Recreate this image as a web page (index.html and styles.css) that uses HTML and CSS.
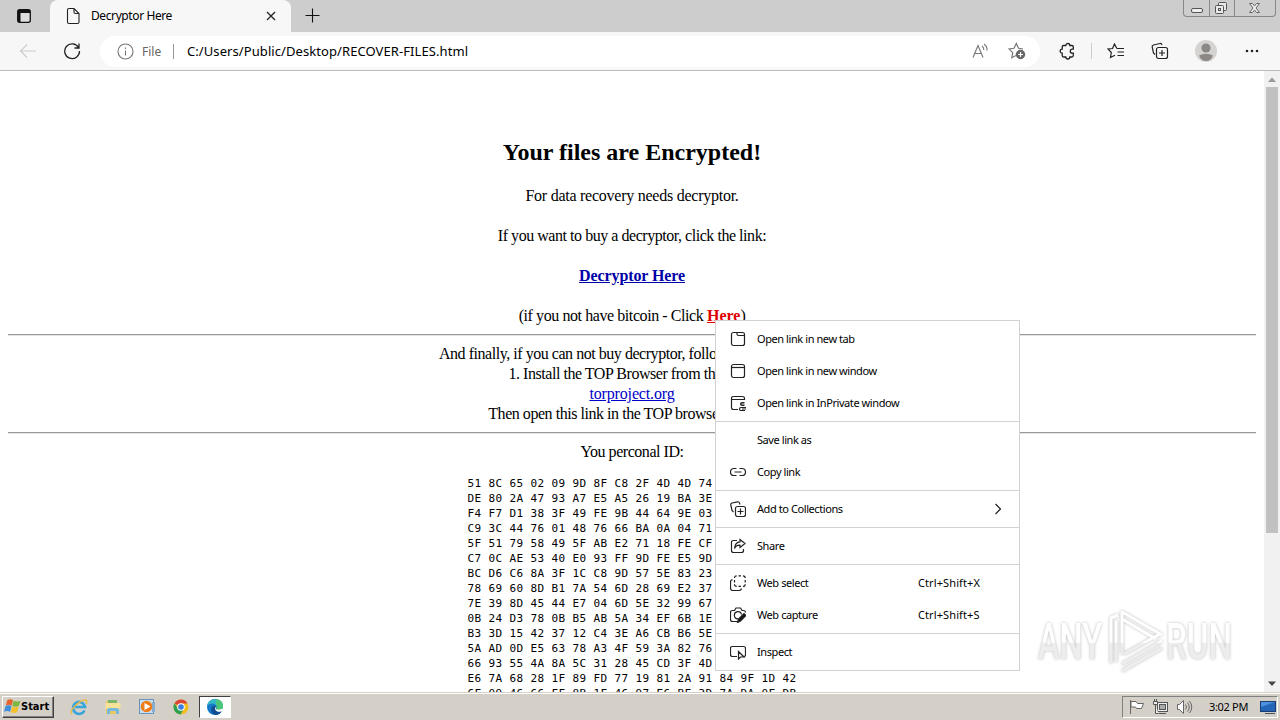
FILE: index.html
```html
<!DOCTYPE html>
<html lang="en">
<head>
    <meta charset="UTF-8">
    <title>Decryptor Here</title>
    <link rel="stylesheet" href="styles.css">
</head>
<body>
    <div class="tabstrip">
        <div class="workspaces">
            <svg width="16" height="16" viewBox="0 0 16 16"><rect x="1.700" y="1.700" width="12.600" height="12.600" rx="2" fill="#ddd" stroke="#111" stroke-width="1.300"/><path d="M2 2h12v3H2z" fill="#111"/><path d="M2 4h2.500v10H2z" fill="#111"/></svg>
        </div>
        <div class="tab">
            <svg width="16" height="18" viewBox="0 0 16 18" fill="none" stroke="#222" stroke-width="1.1"><path d="M4 1.5h5l5 5v8.500q0 1.500-1.500 1.500h-8.500q-1.500 0-1.500-1.500v-12q0-1.500 1.500-1.500zM9 1.500v3.500q0 1.500 1.500 1.500h3.500"/></svg>
            <span class="tab-title">Decryptor Here</span>
            <svg width="10" height="10" viewBox="0 0 10 10" stroke="#222" stroke-width="1.3"><path d="M1 1l8 8M9 1l-8 8"/></svg>
        </div>
        <svg class="new-tab" width="16" height="16" viewBox="0 0 16 16" stroke="#111" stroke-width="1.1"><path d="M1.500 8.500h14M8.500 1.500v14"/></svg>
        <div class="window-buttons">
            <span class="win-min"><svg width="25" height="16" viewBox="0 0 25 16"><rect x="7.500" y="8.500" width="11" height="4" rx="1.500" fill="#eee" stroke="#555"/></svg></span>
            <span class="win-max"><svg width="24" height="16" viewBox="0 0 24 16" fill="#e8e8e8" stroke="#555"><rect x="8.500" y="2.500" width="8" height="8" rx="1"/><rect x="5.500" y="5.500" width="8" height="8" rx="1"/><rect x="8.500" y="8.500" width="2" height="2"/></svg></span>
            <span class="win-close"><svg width="40" height="16" viewBox="0 0 40 16"><path d="M14.500 3.500h3l2 2.500 2-2.500h3l-3.500 4.500 3.500 4.500h-3l-2-2.500-2 2.500h-3l3.500-4.500z" fill="#eee" stroke="#666"/></svg></span>
        </div>
    </div>

    <div class="toolbar">
        <svg class="back" width="18" height="16" viewBox="0 0 18 16" fill="none" stroke="#ccc" stroke-width="1.1"><path d="M17 8H2M8 1.500L1.500 8 8 14.500"/></svg>
        <svg class="reload" width="18" height="18" viewBox="0 0 18 18" fill="none" stroke="#222" stroke-width="1.3"><path d="M15.500 5.500A7.400 7.400 0 1 0 16.500 9M16 1.500v4.500h-4.500"/></svg>
        <div class="address">
            <svg width="17" height="17" viewBox="0 0 17 17" fill="none" stroke="#777" stroke-width="1.1"><circle cx="8.500" cy="8.500" r="7.500"/><path d="M8.500 7.500v5M8.500 4.500v1.500"/></svg>
            <span class="scheme">File</span>
            <span class="address-line"></span>
            <span class="url">C:/Users/Public/Desktop/RECOVER-FILES.html</span>
            <svg class="read" width="17" height="16" viewBox="0 0 17 16" fill="none" stroke="#777" stroke-width="1.1"><path d="M1 14.500L6 2.500l5 12M2.800 10.500h6.400M10 3q2 1.500 1.800 4M12 1q3.500 2.500 3 6.500"/></svg>
            <svg width="18" height="18" viewBox="0 0 18 18"><path d="M15 7l-4.500-.7L8.300 1.500 6 6.300l-5 .7 3.700 3.700-.9 5L8 13.500" fill="none" stroke="#777" stroke-width="1.200"/><circle cx="12.500" cy="12.500" r="4.700" fill="#666"/><path d="M12.500 10v5M10 12.500h5" stroke="#fff" stroke-width="1.200"/></svg>
        </div>
        <svg class="puzzle" width="17" height="18" viewBox="0 0 17 18" fill="none" stroke="#222" stroke-width="1.3"><path d="M4.500 3.500h2.300a2 2 0 0 1 4 0h2q1.500 0 1.500 1.500v2.200h-1a2 2 0 0 0 0 4h1v2.300q0 1.500-1.500 1.500h-2a2 2 0 0 1-4 0H4.500q-1.300 0-1.300-1.500v-2.300a2 2 0 0 1 0-4V5q0-1.500 1.300-1.500z"/></svg>
        <span class="toolbar-line"></span>
        <svg class="favorites" width="18" height="16" viewBox="0 0 18 16" fill="none" stroke="#222" stroke-width="1.2"><path d="M9.800 5.500L7.500 1 5.500 5.500 1 6l3.300 3.500L3.500 14.500 8 12.200M10 5.500H17M10.500 9H17M10.500 12.500H17"/></svg>
        <svg class="collections" width="18" height="18" viewBox="0 0 18 18" fill="none" stroke="#222" stroke-width="1.2"><path d="M4 12.500L2.500 11 1.200 5q-.4-1.500 1.300-2L9 1.500q1.500-.3 2 1.500"/><rect x="5.500" y="5.500" width="11" height="11" rx="2"/><path d="M11 8v6M8 11h6"/></svg>
        <svg class="profile" width="22" height="22" viewBox="0 0 22 22"><circle cx="11" cy="11" r="11" fill="#d5d3d1"/><circle cx="11" cy="8" r="4.600" fill="#8b8885"/><path d="M4 15.500q7-3.500 14 0-2 5.500-7 5.500t-7-5.500z" fill="#8b8885"/></svg>
        <svg class="dots" width="14" height="4" viewBox="0 0 14 4" fill="#222"><circle cx="2" cy="2" r="1.300"/><circle cx="7" cy="2" r="1.300"/><circle cx="12" cy="2" r="1.300"/></svg>
    </div>

    <div class="viewport">
        <div class="page">
            <h2>Your files are Encrypted!</h2>
            <p class="needs">For data recovery needs decryptor.</p>
            <p>If you want to buy a decryptor, click the link:</p>
            <p class="decryptor"><a href="#">Decryptor Here</a></p>
            <p class="bitcoin">(if you not have bitcoin - Click <a href="#">Here</a>)</p>
            <hr>
            <div class="steps">
                And finally, if you can not buy decryptor, follow these two steps:<br>
                1. Install the TOP Browser from this link:<br>
                <a class="tor" href="#">torproject.org</a><br>
                Then open this link in the TOP browser: support
            </div>
            <hr>
            <div class="steps">You perconal ID:</div>
<pre>51 8C 65 02 09 9D 8F C8 2F 4D 4D 74
DE 80 2A 47 93 A7 E5 A5 26 19 BA 3E
F4 F7 D1 38 3F 49 FE 9B 44 64 9E 03
C9 3C 44 76 01 48 76 66 BA 0A 04 71
5F 51 79 58 49 5F AB E2 71 18 FE CF
C7 0C AE 53 40 E0 93 FF 9D FE E5 9D
BC D6 C6 8A 3F 1C C8 9D 57 5E 83 23
78 69 60 8D B1 7A 54 6D 28 69 E2 37
7E 39 8D 45 44 E7 04 6D 5E 32 99 67
0B 24 D3 78 0B B5 AB 5A 34 EF 6B 1E
B3 3D 15 42 37 12 C4 3E A6 CB B6 5E
5A AD 0D E5 63 78 A3 4F 59 3A 82 76
66 93 55 4A 8A 5C 31 28 45 CD 3F 4D</pre>
<pre>E6 7A 68 28 1F 89 FD 77 19 81 2A 91 84 9F 1D 42
6F 09 46 66 FF 8B 1F 46 97 E6 BF 3D 7A DA 0F DB</pre>
        </div>
        <div class="scrollbar">
            <svg width="16" height="16" viewBox="0 0 16 16"><path d="M4 11l4-4.500 4 4.500z" fill="#999"/></svg>
            <div class="thumb"></div>
            <svg class="scroll-down" width="16" height="16" viewBox="0 0 16 16"><path d="M4 5.500h8l-4 4.500z" fill="#444"/></svg>
        </div>
    </div>

    <div class="taskbar">
        <div class="start">
            <svg width="17" height="17" viewBox="0 0 16 16"><path d="M3 2q3-1.500 5.500 0L7.200 7Q5 5.500 1.800 7z" fill="#e8602c"/><path d="M9 2.500q3 1.500 6.500 0l-1.500 5q-3 1.400-6.200 0z" fill="#7db843"/><path d="M1.500 7.600q3-1.500 5.500 0L5.800 13q-3-1.500-5.800 0z" fill="#3d8edb"/><path d="M7.700 8.100q2.700 1.500 6 0l-1.300 5.400q-3 1.400-6 0z" fill="#f5c02c"/></svg>
            <span>Start</span>
        </div>
        <div class="launcher">
            <svg width="18" height="18" viewBox="0 0 18 18" fill="none"><path d="M14.500 12.500A6 6 0 1 1 15 9H5" stroke="#38a5dc" stroke-width="2.600"/><path d="M2 16Q-1 14 5 8t10-6q3 0 1 4" stroke="#e9bc40" stroke-width="1.300"/></svg>
            <svg width="18" height="18" viewBox="0 0 18 18"><path d="M2 3h5l1 2h7v11H2z" fill="#e9c963"/><path d="M4 2h9v5H4z" fill="#79b66b"/><path d="M1.500 5h15v6h-15z" fill="#f7e297"/><path d="M3 16v-4q0-2 2-2h8q2 0 2 2v4h-3v-3H6v3z" fill="#77b8df"/></svg>
            <svg width="18" height="18" viewBox="0 0 18 18"><rect x="1.500" y="1.500" width="14" height="14" fill="#c9dff2" stroke="#6994bf"/><rect x="14" y="4" width="3" height="10" fill="#86add0"/><circle cx="8.500" cy="8.500" r="5.800" fill="#ee7d17"/><path d="M6.500 5l6 3.500-6 3.500z" fill="#fff"/></svg>
            <svg width="18" height="18" viewBox="0 0 18 18"><circle cx="9" cy="9" r="7.500" fill="#f3bd20"/><path d="M9 9L2.500 5.200A7.500 7.500 0 0 1 15.500 5.500H9z" fill="#dc4638"/><path d="M2.500 5.200A7.500 7.500 0 0 0 8.500 16.500L12 10.500 9 9 6 10.500z" fill="#2fa052"/><circle cx="9" cy="9" r="3.800" fill="#fff"/><circle cx="9" cy="9" r="2.800" fill="#3b7de0"/></svg>
        </div>
        <div class="running">
            <svg width="18" height="18" viewBox="0 0 18 18"><circle cx="9" cy="9" r="8" fill="#1678c8"/><path d="M1.200 7.500Q3 1 9 1q7.500 0 8 7 0 4-4 4-3 0-3-1.500 1-1 .5-2.500Q9 5 6 5.500q-3 .3-4.800 2z" fill="#35b9c4"/><path d="M10 1.200q7 1 7 6.800 0 4-4 4-3 0-3-1.500 2-1.500 0-4.500z" fill="#4dc777"/><path d="M10 10.500q1 2.500 6 2-2 4.500-7 4.500-5-2-3.500-7Q7 7.500 10 8z" fill="#124d91"/><path d="M9.600 8.500q-1.800 3 1.600 5 3 1 6.800-1l-.3-2.500q-4 2.500-7.700 1.200z" fill="#fff"/></svg>
        </div>
        <div class="tray">
            <svg width="16" height="16" viewBox="0 0 16 16" fill="#fff" stroke="#666"><path d="M1.500 1v14M2 2.500h5l1.500 2h6l-2 5h-5l-1-1.500H2z"/></svg>
            <svg width="17" height="16" viewBox="0 0 17 16" fill="#eee" stroke="#555"><rect x="5.500" y="3.500" width="10" height="9"/><rect x="7.500" y="5.500" width="6" height="5" fill="#aaa"/><path d="M7 14.500h7M1.500 2.500v3h4v-3zM3.500 6v8.500h3M2.500 0v2.500M4.500 0v2.500"/></svg>
            <svg width="17" height="16" viewBox="0 0 17 16" fill="#fff" stroke="#666"><path d="M1.500 5.500h2l4-4v13l-4-4h-2z"/><path d="M9.500 5.500q2 2.500 0 5M11.500 3.500q3.500 4.500 0 9M13.500 2q4.500 6 0 12" fill="none"/></svg>
            <span class="clock">3:02 PM</span>
            <svg width="16" height="16" viewBox="0 0 16 16"><rect x=".5" y="2.500" width="15" height="10" fill="#2565b8" stroke="#1a3d75"/><path d="M1 3h14L1 8z" fill="#4b91dd"/><path d="M5 14.500h10" stroke="#456"/></svg>
        </div>
    </div>

    <svg class="watermark" width="210" height="76" viewBox="0 0 210 76">
        <defs>
            <linearGradient id="wm-fade" x1="0" y1="0" x2="0" y2="76" gradientUnits="userSpaceOnUse">
                <stop offset="0.500" stop-color="#fff"/>
                <stop offset="0.520" stop-color="#ededed"/>
            </linearGradient>
        </defs>
        <g class="wm-letters">
            <text x="8" y="55" textLength="64" lengthAdjust="spacingAndGlyphs">ANY</text>
            <text x="136" y="55" textLength="66" lengthAdjust="spacingAndGlyphs">RUN</text>
        </g>
        <g class="wm-logo">
            <path d="M81 59V14l7-3"/>
            <path d="M86 17v41"/>
            <path d="M92 50V8l40 23M92 15l34 20M94 50l36-20M92 60l40-23M92 67l40-23"/>
        </g>
    </svg>

    <div class="menu">
        <div class="item">
            <svg viewBox="0 0 16 16"><rect x="1.500" y="1.500" width="13" height="13" rx="2"/><path d="M7 1.500v1.500q0 1.500 1.500 1.500h6"/></svg>
            <span>Open link in new tab</span>
        </div>
        <div class="item">
            <svg viewBox="0 0 16 16"><rect x="1.500" y="1.500" width="13" height="13" rx="2"/><path d="M1.500 4.500h13"/></svg>
            <span>Open link in new window</span>
        </div>
        <div class="item">
            <svg viewBox="0 0 16 16"><path d="M8 14.500H3.500q-2 0-2-2v-9q0-2 2-2h9q2 0 2 2V5M1.500 4.500h13M14.500 7.500h-2q-2 0-2 1.500t2 1.500h2M10.500 9h4M16 12.500h-5q-1.500 0-1.500 1.500t1.500 1.500h4M12 14h4"/></svg>
            <span>Open link in InPrivate window</span>
        </div>
        <div class="divider"></div>
        <div class="item">
            <svg viewBox="0 0 16 16"></svg>
            <span>Save link as</span>
        </div>
        <div class="item">
            <svg viewBox="0 0 16 16"><path d="M6.500 4.500H4a3.500 3.500 0 0 0 0 7h2.500M9.500 4.500H12a3.500 3.500 0 0 1 0 7H9.500M4.500 8h7"/></svg>
            <span>Copy link</span>
        </div>
        <div class="divider"></div>
        <div class="item">
            <svg viewBox="0 0 16 16"><path d="M3.500 11L2 9.500.8 4q-.3-1.500 1.200-2L7.500.8q1.500-.3 2 1.200L10 3.500"/><rect x="5.500" y="5.500" width="10" height="10" rx="2"/><path d="M10.500 7.500v6M7.500 10.500h6"/></svg>
            <span>Add to Collections</span>
            <svg class="arrow" viewBox="0 0 16 16"><path d="M5.500 3l5 5-5 5"/></svg>
        </div>
        <div class="divider"></div>
        <div class="item">
            <svg viewBox="0 0 16 16"><path d="M7 2.500H3.500q-2 0-2 2v8q0 2 2 2h8q2 0 2-2V11M10 1.500l5 4-5 4V7.200Q6 7 4.500 10.500 5 4 10 3.800z"/></svg>
            <span>Share</span>
        </div>
        <div class="divider"></div>
        <div class="item">
            <svg viewBox="0 0 16 16"><path d="M2.500 4.500q-2 .5-2 2.500v6q0 2.500 2.500 2.500h6q2 0 2.500-2"/><path d="M4.500 3q0-2.200 2.200-2.200M8.500.8h2.500M13 .8q2.200 0 2.200 2.200M15.200 5v2.500M15.200 9.200q0 2.200-2.200 2.200M11 11.400H8.500M6.700 11.400q-2.200 0-2.200-2.200M4.500 7.500V5"/></svg>
            <span>Web select</span>
            <span class="shortcut">Ctrl+Shift+X</span>
        </div>
        <div class="item">
            <svg viewBox="0 0 16 16"><path d="M7 14.500H2.500q-2 0-2-2v-7q0-2 2-2h2L6 1h4.500l1.500 2.500h1.500q2 0 2 2M8 11.800a3.600 3.600 0 1 1 3.500-4.300"/><path d="M7.500 15.500l1-3.500L14 6.500l2 2-5.500 5.500z" fill="#111"/></svg>
            <span>Web capture</span>
            <span class="shortcut">Ctrl+Shift+S</span>
        </div>
        <div class="divider"></div>
        <div class="item">
            <svg viewBox="0 0 16 16"><path d="M7 12.500H2.500q-2 0-2-2V4.500q0-2 2-2h11q2 0 2 2v6q0 1.500-1 2M8.500 7.500v7.500l2-2h3.500z"/></svg>
            <span>Inspect</span>
        </div>
    </div>
</body>
</html>
```
FILE: styles.css
```css
* {
    box-sizing: border-box;
}
body {
    margin: 0;
    width: 1280px;
    height: 720px;
    overflow: hidden;
    display: flex;
    flex-direction: column;
    position: relative;
    background: #fff;
    color: #000;
    font-family: "Noto Sans", sans-serif;
    font-size: 12px;
}
svg {
    display: block;
    flex: none;
}

/* tabs */
.tabstrip {
    height: 32px;
    background: #cdcdcd;
    display: flex;
    flex: none;
}
.workspaces {
    width: 50px;
    padding: 8px 0 0 16px;
}
.tab {
    width: 241px;
    display: flex;
    align-items: center;
    padding: 0 15px 0 15px;
    background: #f7f7f7;
    border-radius: 8px 8px 0 0;
}
.tab-title {
    margin: -2px 0 0 10px;
    flex: 1;
    font-size: 12px;
    letter-spacing: -0.4px;
}
.new-tab {
    margin: 7px 0 0 13px;
}
.window-buttons {
    display: flex;
    margin-left: auto;
    margin-right: 4px;
    height: 17px;
    border: 1px solid #888;
    border-top: 0;
    border-radius: 0 0 4px 4px;
}
.win-max {
    border-left: 1px solid #888;
    border-right: 1px solid #888;
}

/* toolbar */
.toolbar {
    height: 39px;
    background: #f7f7f7;
    border-bottom: 1px solid #bbb;
    display: flex;
    align-items: center;
    flex: none;
}
.back {
    margin-left: 19px;
}
.reload {
    margin-left: 26px;
}
.address {
    width: 940px;
    height: 31px;
    margin-left: 19px;
    padding: 0 14px 0 17px;
    background: #fff;
    border-radius: 16px;
    display: flex;
    align-items: center;
}
.scheme {
    width: 24px;
    margin-left: 8px;
    color: #666;
}
.address-line {
    width: 1px;
    height: 15px;
    background: #999;
    margin: 0 13px 0 7px;
}
.url {
    flex: 1;
    margin-top: -1px;
    font-size: 13px;
    letter-spacing: 0.08px;
}
.read {
    margin-right: 19px;
}
.puzzle {
    margin-left: 19px;
}
.toolbar-line {
    width: 1px;
    height: 16px;
    background: #ccc;
    margin: 0 15px 0 15px;
}
.collections {
    margin-left: 26px;
}
.profile {
    margin-left: 26px;
}
.dots {
    margin-left: 28px;
}

/* web page */
.viewport {
    height: 621px;
    display: flex;
    flex: none;
    overflow: hidden;
}
.page {
    width: 1264px;
    padding: 67px 8px 0;
    text-align: center;
    font-family: "Liberation Serif", serif;
    font-size: 16px;
    line-height: 20px;
    letter-spacing: -0.46px;
    white-space: nowrap;
}
h2 {
    margin: 0 0 20px;
    font-size: 24px;
    line-height: 28px;
    letter-spacing: 0;
}
p {
    margin: 0 0 20px;
}
a {
    color: #0000c8;
}
.needs {
    letter-spacing: -0.25px;
}
.decryptor {
    font-weight: bold;
    letter-spacing: -0.1px;
}
.decryptor a {
    color: #0000a8;
}
.tor {
    letter-spacing: -0.15px;
}
.bitcoin {
    margin: 0;
    letter-spacing: -0.42px;
}
.bitcoin a {
    color: #e00000;
    font-weight: bold;
    letter-spacing: 0;
}
hr {
    height: 2px;
    margin: 8px 0;
    border: 0;
    border-top: 1px solid #999;
    border-bottom: 1px solid #e4e4e4;
}
pre {
    width: 329px;
    margin: 14px auto 0;
    text-align: left;
    font-family: "DejaVu Sans Mono", monospace;
    font-size: 11px;
    line-height: 15px;
    letter-spacing: 0.378px;
}
pre + pre {
    margin-top: 0;
}
.scrollbar {
    width: 16px;
    background: #f1f1f1;
    display: flex;
    flex-direction: column;
}
.thumb {
    width: 12px;
    height: 446px;
    margin: 0 2px;
    background: #c1c1c1;
}
.scroll-down {
    margin-top: auto;
}

/* taskbar */
.taskbar {
    height: 28px;
    background: #d4d0c8;
    border-top: 1px solid #d4d0c8;
    box-shadow: inset 0 1px #fff;
    display: flex;
    align-items: center;
    flex: none;
    padding: 2px 2px 2px;
}
.start {
    width: 52px;
    height: 22px;
    padding-left: 1px;
    display: flex;
    align-items: center;
    border: 1px solid;
    border-color: #fff #404040 #404040 #fff;
    box-shadow: inset -1px -1px #808080;
    font-family: "DejaVu Sans Condensed", "DejaVu Sans", sans-serif;
    font-size: 11px;
    font-weight: bold;
}
.launcher {
    display: flex;
    gap: 16px;
    margin-left: 16px;
}
.running {
    width: 32px;
    height: 22px;
    margin-left: 9px;
    padding: 1px 0 0 6px;
    background: #fff;
    border: 1px solid;
    border-color: #404040 #fff #fff #404040;
}
.tray {
    width: 156px;
    height: 22px;
    margin-left: auto;
    padding: 0 1px 0 6px;
    display: flex;
    align-items: center;
    gap: 7px;
    border: 1px solid;
    border-color: #808080 #fff #fff #808080;
}
.clock {
    flex: 1;
    padding-left: 4px;
    text-align: center;
    white-space: nowrap;
    font-size: 11px;
    letter-spacing: -0.3px;
}

/* watermark over the page */
.watermark {
    position: absolute;
    left: 1030px;
    top: 604px;
    filter: drop-shadow(0 0 1.5px #bbb);
}
.wm-letters {
    font-family: Roboto, sans-serif;
    font-size: 50px;
    font-weight: 500;
    fill: url(#wm-fade);
}
.wm-logo {
    fill: none;
    stroke: url(#wm-fade);
    stroke-width: 3;
    stroke-linejoin: round;
}

/* context menu */
.menu {
    position: absolute;
    left: 715px;
    top: 320px;
    width: 305px;
    padding: 2px 0;
    background: #fff;
    border: 1px solid #d2d2d2;
}
.item {
    height: 32px;
    display: flex;
    align-items: center;
    padding: 0 13px 0 14px;
    font-size: 11px;
    letter-spacing: -0.42px;
}
.item span {
    margin-top: -2px;
}
.item svg {
    width: 16px;
    height: 16px;
    margin-right: 11px;
    fill: none;
    stroke: #222;
    stroke-width: 1.2;
}
.item .arrow {
    margin: 0 0 0 auto;
}
.item .shortcut {
    width: 75px;
    margin-left: auto;
    margin-right: 13px;
    letter-spacing: 0.1px;
}
.divider {
    height: 1px;
    margin: 2px 0;
    background: #d2d2d2;
}
```
